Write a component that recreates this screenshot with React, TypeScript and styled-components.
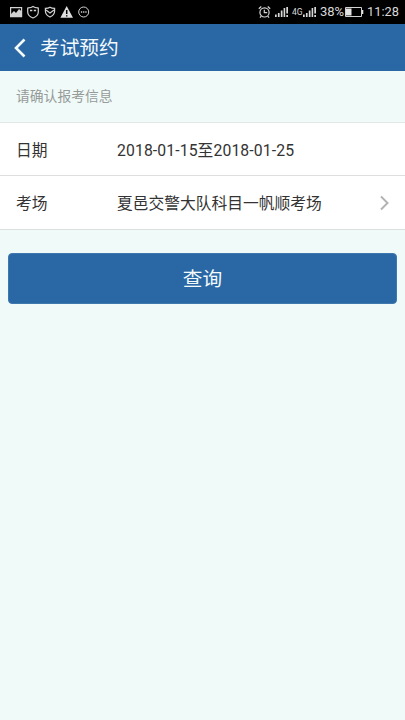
import React from "react";
import styled, { createGlobalStyle } from "styled-components";

const GlobalStyle = createGlobalStyle`
  * { box-sizing: border-box; }
  body {
    margin: 0;
    background: #f0faf9;
    font-family: Roboto, "Noto Sans CJK SC", sans-serif;
  }
`;

const Screen = styled.div`
  display: flex;
  flex-direction: column;
  min-height: 720px;
  background: #f0faf9;
`;

const StatusBar = styled.div`
  display: flex;
  justify-content: space-between;
  height: 24px;
  padding: 0 6px 0 10px;
  background: #000;
  color: #d8d8d8;
`;

const StatusGroup = styled.div`
  display: flex;
  align-items: center;
  svg { display: block; flex: none; }
`;

const SignalSlot = styled.span`
  margin-left: 4px;
`;

const StatusText = styled.span<{ $size: number; $left?: number; $width?: number }>`
  font-size: ${(p) => p.$size}px;
  line-height: 24px;
  margin-left: ${(p) => p.$left ?? 0}px;
  width: ${(p) => (p.$width ? `${p.$width}px` : "auto")};
  white-space: nowrap;
`;

const TitleBar = styled.header`
  display: flex;
  align-items: center;
  height: 47px;
  padding-left: 13px;
  background: #2967a5;
  color: #f4fafc;
`;

const BackButton = styled.button`
  display: flex;
  width: 14px;
  height: 22px;
  padding: 0;
  border: 0;
  background: none;
  color: inherit;
`;

const Title = styled.h1`
  margin: 0 0 0 13px;
  padding-top: 2px;
  font-size: 19.7px;
  font-weight: 400;
  line-height: 30px;
`;

const Hint = styled.p`
  height: 51px;
  margin: 0;
  padding-left: 16px;
  font-size: 13.8px;
  line-height: 51px;
  color: #969b98;
`;

const Form = styled.div`
  border-top: 1px solid #dfe8e5;
  background: #fff;
`;

const Row = styled.div<{ $height: number }>`
  display: flex;
  align-items: center;
  height: ${(p) => p.$height}px;
  padding: 0 16px;
  border-bottom: 1px solid #dcdfde;
  font-size: 15.75px;
  line-height: 24px;
  color: #333;
`;

const Label = styled.span`
  width: 101px;
  padding-top: 3px;
`;

const Value = styled.span<{ $spacing?: number }>`
  flex: 1;
  padding-top: 3px;
  letter-spacing: ${(p) => p.$spacing ?? 0}px;
  white-space: nowrap;
`;

const QueryButton = styled.button`
  height: 51px;
  margin: 23px 8px 0;
  padding: 2px 0 0;
  border: 1px solid #3f78ae;
  border-radius: 4px;
  background: #2967a5;
  color: #f4fafc;
  font-family: inherit;
  font-size: 19.7px;
  line-height: 47px;
`;

const NoticeIcons = () => (
  <svg width="82" height="14" viewBox="0 0 82 14" fill="none" stroke="#d2d2d2" strokeWidth="1.2">
    <path d="M.6 2.6h11v9H.6z" />
    <path d="M1 9l3-3 2 2 3-4 2.2 2v5.500H1z" fill="#d2d2d2" stroke="none" />
    <path d="M23 1.500c-2 1.300-3.400 1.300-5.300 1.500V7c0 3 2.200 4.800 5.300 6 3.100-1.200 5.300-3 5.300-6V3c-1.900-.2-3.300-.2-5.300-1.500z" />
    <path d="M20 5.500h2.300M23.800 5.500h2.300" strokeWidth="1.600" />
    <path d="M40 2.200c-1.600 1-3 1.100-4.600 1.100V6c0 2.800 1.900 4.800 4.600 6 2.700-1.200 4.600-3.200 4.600-6V3.300c-1.600 0-3-.1-4.600-1.100z" />
    <path d="M36 5l4 3 4-3" />
    <path d="M56.700 1L63 12.800H50.400z" fill="#dedede" stroke="none" />
    <path d="M56.700 5v4M56.700 10.200v1.400" stroke="#000" strokeWidth="1.500" />
    <circle cx="73.700" cy="7" r="5" strokeWidth="1" />
    <path d="M70.900 7h1.300M73.100 7h1.300M75.300 7h1.300" strokeWidth="1.300" />
  </svg>
);

const AlarmIcon = () => (
  <svg width="13" height="14" viewBox="0 0 13 14" fill="none" stroke="#d2d2d2" strokeWidth="1.2">
    <circle cx="6.500" cy="7.400" r="4.600" />
    <path d="M6.300 4.700v3h2.900M.8 3.800L3.300 1.500M12.200 3.800L9.700 1.500M3.300 11l-1.300 1.700M9.700 11l1.300 1.700" />
  </svg>
);

const SignalIcon = () => (
  <svg width="13" height="12" viewBox="0 0 13 12" fill="#d8d8d8">
    <path d="M0 8.500h1.700V11H0zM2.900 7h1.700v4H2.900zM5.800 4.500h1.700V11H5.800zM8.600 2h1.600v9H8.600zM11.300 1h1.700v6.500h-1.700zM11.300 9H13v2h-1.700z" />
  </svg>
);

const BatteryIcon = () => (
  <svg width="20" height="12" viewBox="0 0 20 12">
    <path d="M1.500 1.500h16v9h-16z" fill="none" stroke="#d2d2d2" strokeWidth="1" />
    <path d="M2 2.500h5.500v7H2zM18 4h1.300v4H18z" fill="#e4e4e4" />
  </svg>
);

export default function App() {
  return (
    <>
      <GlobalStyle />
      <Screen>
        <StatusBar>
          <StatusGroup><NoticeIcons /></StatusGroup>
          <StatusGroup>
            <AlarmIcon />
            <SignalSlot><SignalIcon /></SignalSlot>
            <StatusText $size={8.5} $left={4} $width={11}>4G</StatusText>
            <SignalIcon />
            <StatusText $size={13} $left={4} $width={24}>38%</StatusText>
            <BatteryIcon />
            <StatusText $size={12.8} $left={3} $width={32}>11:28</StatusText>
          </StatusGroup>
        </StatusBar>
        <TitleBar>
          <BackButton aria-label="返回">
            <svg width="14" height="22" viewBox="0 0 14 22" fill="none" stroke="currentColor" strokeWidth="2.600">
              <path d="M11.500 2.500L3 11l8.500 8.500" />
            </svg>
          </BackButton>
          <Title>考试预约</Title>
        </TitleBar>
        <Hint>请确认报考信息</Hint>
        <Form>
          <Row $height={53}>
            <Label>日期</Label>
            <Value $spacing={0.11}>2018-01-15至2018-01-25</Value>
          </Row>
          <Row $height={54}>
            <Label>考场</Label>
            <Value>夏邑交警大队科目一帆顺考场</Value>
            <svg width="9" height="16" viewBox="0 0 9 16" fill="none" stroke="#b3b3b3" strokeWidth="2">
              <path d="M1 1.500L7.500 8 1 14.500" />
            </svg>
          </Row>
        </Form>
        <QueryButton>查询</QueryButton>
      </Screen>
    </>
  );
}
